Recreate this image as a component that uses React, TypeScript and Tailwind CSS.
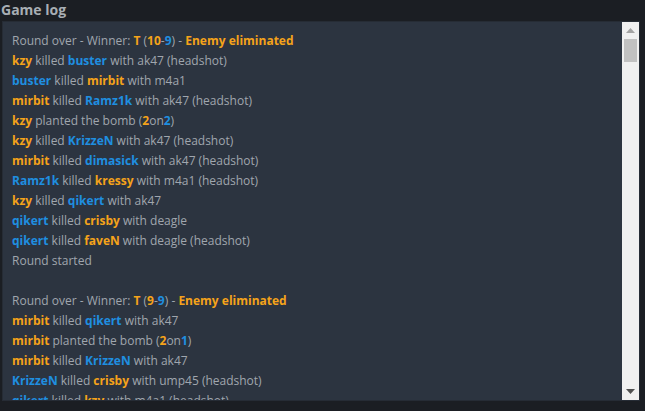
import React from "react";

type Seg = { t: string; c?: "o" | "b" };

const O = (t: string): Seg => ({ t, c: "o" });
const B = (t: string): Seg => ({ t, c: "b" });
const G = (t: string): Seg => ({ t });

const lines: Seg[][] = [
  [G("Round over - Winner: "), O("T"), G(" ("), O("10"), G("-"), B("9"), G(") - "), O("Enemy eliminated")],
  [O("kzy"), G(" killed "), B("buster"), G(" with ak47 (headshot)")],
  [B("buster"), G(" killed "), O("mirbit"), G(" with m4a1")],
  [O("mirbit"), G(" killed "), B("Ramz1k"), G(" with ak47 (headshot)")],
  [O("kzy"), G(" planted the bomb ("), O("2"), G("on"), B("2"), G(")")],
  [O("kzy"), G(" killed "), B("KrizzeN"), G(" with ak47 (headshot)")],
  [O("mirbit"), G(" killed "), B("dimasick"), G(" with ak47 (headshot)")],
  [B("Ramz1k"), G(" killed "), O("kressy"), G(" with m4a1 (headshot)")],
  [O("kzy"), G(" killed "), B("qikert"), G(" with ak47")],
  [B("qikert"), G(" killed "), O("crisby"), G(" with deagle")],
  [B("qikert"), G(" killed "), O("faveN"), G(" with deagle (headshot)")],
  [G("Round started")],
  [],
  [G("Round over - Winner: "), O("T"), G(" ("), O("9"), G("-"), B("9"), G(") - "), O("Enemy eliminated")],
  [O("mirbit"), G(" killed "), B("qikert"), G(" with ak47")],
  [O("mirbit"), G(" planted the bomb ("), O("2"), G("on"), B("1"), G(")")],
  [O("mirbit"), G(" killed "), B("KrizzeN"), G(" with ak47")],
  [B("KrizzeN"), G(" killed "), O("crisby"), G(" with ump45 (headshot)")],
  [B("qikert"), G(" killed "), O("kzy"), G(" with m4a1 (headshot)")],
  [O("kzy"), G(" killed "), B("Ramz1k"), G(" with ak47")],
];

export default function App() {
  return (
    <div
      className="w-[645px] h-[411px] bg-[#1b1e23] overflow-hidden flex flex-col"
      style={{ fontFamily: '"Open Sans", "Noto Sans", sans-serif' }}
    >
      <div className="h-[21px] pl-[1px] text-[14px] leading-[20px] font-bold text-[#a8aeb4]">
        Game log
      </div>
      <div className="ml-[2px] w-[638px] h-[380px] flex bg-[#2c3440] border border-[#262c35]">
        <div className="flex-1 overflow-hidden pl-[9px] pt-[9px]">
          {lines.map((l, i) => (
            <div key={i} className="h-[20px] leading-[20px] text-[12px] whitespace-nowrap text-[#a0a6ae]">
              {l.map((s, j) => (
                <span
                  key={j}
                  className={
                    s.c === "o"
                      ? "font-bold text-[#f5a31a]"
                      : s.c === "b"
                      ? "font-bold text-[#1f8fe0]"
                      : ""
                  }
                >
                  {s.t}
                </span>
              ))}
            </div>
          ))}
        </div>
        <div className="w-[17px] bg-[#f0f0f0] flex flex-col items-center">
          <div className="h-[17px] flex items-center justify-center">
            <svg width="9" height="5" viewBox="0 0 9 5">
              <path d="M4.5 0 L9 5 L0 5 Z" fill="#a3a3a3" />
            </svg>
          </div>
          <div className="w-[13px] h-[23px] bg-[#c1c1c1]" />
          <div className="flex-1" />
          <div className="h-[17px] flex items-center justify-center">
            <svg width="9" height="5" viewBox="0 0 9 5">
              <path d="M0 0 L9 0 L4.5 5 Z" fill="#505050" />
            </svg>
          </div>
        </div>
      </div>
    </div>
  );
}
